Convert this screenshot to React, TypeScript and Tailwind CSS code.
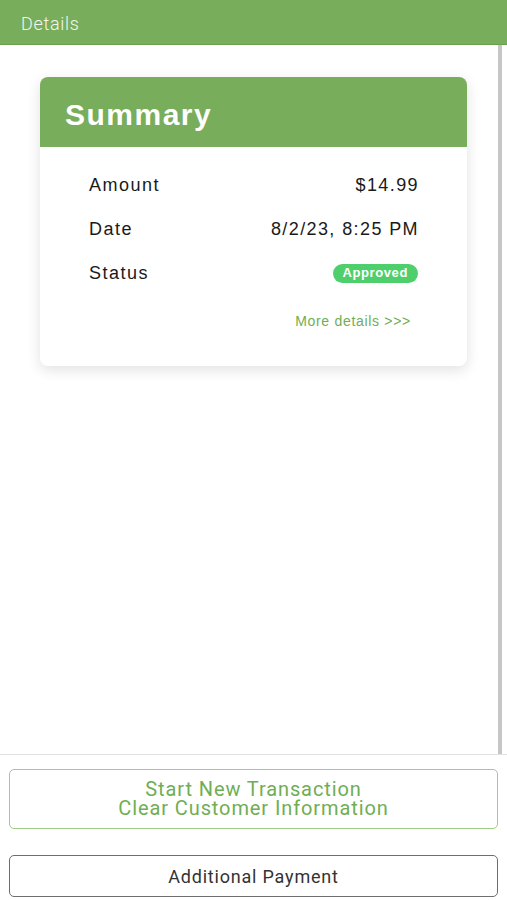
import React from 'react';

const rows = [
    { label: 'Amount', value: '$14.99' },
    { label: 'Date', value: '8/2/23, 8:25 PM' },
];

const App = () => {
    return (
        <div className="w-[507px] h-[900px] bg-white flex flex-col overflow-hidden" style={{ fontFamily: 'Roboto, "Liberation Sans", sans-serif' }}>
            {/* Header */}
            <div className="h-[45px] shrink-0 bg-[#78ad5b] flex items-center px-[21px] pt-[3px] border-b border-[#6c9f52]">
                <span className="text-[18px] font-light text-white/90 tracking-[0.7px]">Details</span>
            </div>

            {/* Content */}
            <div className="flex-1 flex min-h-0">
                <div className="flex-1 pt-[32px] pl-[40px] pr-[31px]">
                    <div className="rounded-[8px] bg-white shadow-[0_4px_14px_rgba(0,0,0,0.12)] overflow-hidden">
                        <div className="h-[70px] bg-[#78ad5b] flex items-center px-[25px] pt-[4px]">
                            <h2 className="text-[30px] font-bold text-white tracking-[1.5px]" style={{ fontFamily: '"Liberation Sans", Arial, sans-serif' }}>Summary</h2>
                        </div>
                        <div className="pl-[49px] pr-[49px] pt-[16px] pb-[35px] text-[18px] text-[#1a1a1a]" style={{ fontFamily: '"Liberation Sans", Arial, sans-serif' }}>
                            {rows.map((r) => (
                                <div key={r.label} className="h-[44px] flex items-center justify-between">
                                    <span className="tracking-[1.5px]">{r.label}</span>
                                    <span className="tracking-[1.4px] -mr-[1px]">{r.value}</span>
                                </div>
                            ))}
                            <div className="h-[44px] flex items-center justify-between">
                                <span className="tracking-[1.5px]">Status</span>
                                <span className="h-[19px] px-[10px] rounded-full bg-[#4ecf6b] text-white text-[13px] font-bold tracking-[0.6px] flex items-center">Approved</span>
                            </div>
                            <div className="flex justify-end pr-[7px] pt-[16px]">
                                <span className="text-[14px] leading-[20px] text-[#6fae54] tracking-[0.7px]">More details &gt;&gt;&gt;</span>
                            </div>
                        </div>
                    </div>
                </div>
                <div className="w-[4px] bg-[#c6c6c6] mr-[5px]"></div>
            </div>

            {/* Footer */}
            <div className="shrink-0 border-t border-[#e2e2e2] px-[9px] pt-[14px] pb-[3px] flex flex-col gap-[26px]">
                <button className="h-[60px] rounded-[5px] border border-[#9fcd89] text-[#6fae54] text-[20px] leading-[19px] tracking-[0.9px] flex flex-col items-center justify-center">
                    <span>Start New Transaction</span>
                    <span>Clear Customer Information</span>
                </button>
                <button className="h-[42px] rounded-[5px] border border-[#6e6e6e] text-[#333] text-[18px] tracking-[0.8px]">
                    Additional Payment
                </button>
            </div>
        </div>
    );
};

export default App;
